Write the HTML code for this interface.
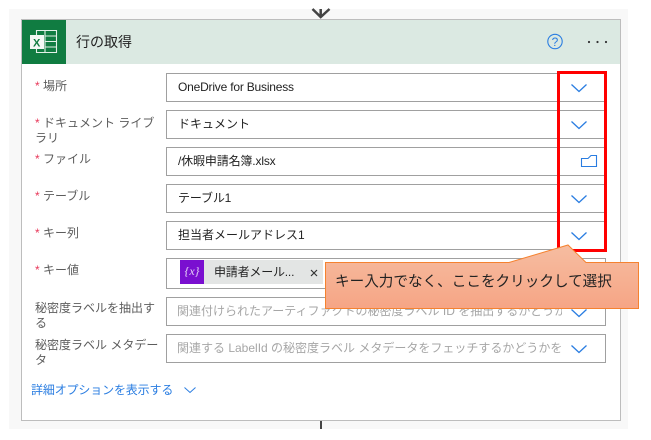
<!DOCTYPE html>
<html lang="ja"><head><meta charset="utf-8"><style>
html,body{margin:0;padding:0;background:#fff}
body{width:651px;height:440px;overflow:hidden;position:relative;font-family:"Liberation Sans","Noto Sans CJK JP",sans-serif;color:#333}
div{position:absolute;box-sizing:border-box;white-space:nowrap}
.in{left:166px;width:440px;height:29px;border:1px solid #a0a0a0;background:#fff;font-size:12px;line-height:27px;padding-left:11px;color:#222;overflow:hidden}
.ph{color:#a6a6a6;width:385px;overflow:hidden;left:10px;top:0;line-height:27px;font-size:12px}
.lb{left:35px;font-size:12px;line-height:15px;color:#5c5c5c;width:125px;white-space:normal}
.lb b{color:#e8385a;font-weight:normal}
svg{position:absolute;overflow:visible}
</style></head><body>
<div style="left:9px;top:9px;width:619px;height:420px;background:#f8f8f8"></div>
<svg style="left:0;top:0" width="651" height="440"><path d="M320.700 9V17.500M312.500 9l8.200 8 8.800-8" fill="none" stroke="#444" stroke-width="2.500"/><path d="M321 421V429" stroke="#444" stroke-width="2"/></svg>
<div style="left:21px;top:19px;width:600px;height:402px;background:#fff;border:1px solid #bdbdbd"></div>
<div style="left:22px;top:20px;width:598px;height:44px;background:#dbe9e2"></div>
<div style="left:22px;top:20px;width:44px;height:44px;background:#107c41"></div>
<svg style="left:22px;top:20px" width="44" height="44"><path d="M14.500 10.500H34.500V32.500H14.500Z M23 10.500V32.500 M23 16H34.500M23 21.500H34.500M23 27H34.500" fill="none" stroke="#e3f0e8" stroke-width="1.100"/><rect x="8" y="15" width="14" height="14" fill="#f4f8f5"/><text x="11" y="26.500" font-family="Liberation Sans" font-weight="bold" font-size="11" fill="#107c41">X</text></svg>
<div style="left:76px;top:32px;font-size:14px;line-height:20px;color:#222">行の取得</div>
<svg style="left:547px;top:33px" width="18" height="18"><circle cx="8" cy="8.500" r="7.200" fill="none" stroke="#2a7de1" stroke-width="1.100"/><text x="8" y="12.800" text-anchor="middle" font-family="Liberation Sans" font-size="12" fill="#2a7de1">?</text></svg>
<svg style="left:587px;top:40px" width="22" height="6"><circle cx="2" cy="2" r="1.100" fill="#333"/><circle cx="10.500" cy="2" r="1.100" fill="#333"/><circle cx="19" cy="2" r="1.100" fill="#333"/></svg>

<div class="lb" style="top:79px"><b>*</b> 場所</div>
<div class="lb" style="top:116px"><b>*</b> ドキュメント ライブラリ</div>
<div class="lb" style="top:152px"><b>*</b> ファイル</div>
<div class="lb" style="top:189px"><b>*</b> テーブル</div>
<div class="lb" style="top:226px"><b>*</b> キー列</div>
<div class="lb" style="top:263px"><b>*</b> キー値</div>
<div class="lb" style="top:301px">秘密度ラベルを抽出する</div>
<div class="lb" style="top:338px">秘密度ラベル メタデータ</div>

<div class="in" style="top:73px;letter-spacing:-.2px">OneDrive for Business</div>
<div class="in" style="top:110px">ドキュメント</div>
<div class="in" style="top:147px;letter-spacing:-.15px">/休暇申請名簿.xlsx</div>
<div class="in" style="top:184px;letter-spacing:-.15px">テーブル1</div>
<div class="in" style="top:221px">担当者メールアドレス1</div>
<div class="in" style="top:258px;height:31px"></div>
<div class="in" style="top:297px"><div class="ph">関連付けられたアーティファクトの秘密度ラベル ID を抽出するかどうかを指定します</div></div>
<div class="in" style="top:334px"><div class="ph">関連する LabelId の秘密度ラベル メタデータをフェッチするかどうかを指定します</div></div>

<div style="left:180px;top:260px;width:24px;height:24px;background:#7a0fd0"></div>
<div style="left:180px;top:260px;width:24px;height:24px;color:#e6d4f6;font:italic 12px/23px 'Liberation Serif',serif;text-align:center">{x}</div>
<div style="left:204px;top:260px;width:119px;height:24px;background:#e3e5e4"></div>
<div style="left:214px;top:260px;font-size:12px;line-height:24px;color:#222;letter-spacing:-.2px">申請者メール...</div>
<svg style="left:310px;top:269px" width="8" height="8"><path d="M1 1L7 7M7 1L1 7" stroke="#333" stroke-width="1.200"/></svg>

<svg style="left:0;top:0" width="651" height="440" fill="none" stroke="#2a7de1" stroke-width="1.300">
<path d="M571.500 84.500l7.500 7 7.500-7"/><path d="M571.500 121.500l7.500 7 7.500-7"/>
<path d="M571.500 195.500l7.500 7 7.500-7"/><path d="M571.500 232.500l7.500 7 7.500-7"/>
<path d="M571.500 309.500l7.500 7 7.500-7"/><path d="M571.500 345.500l7.500 7 7.500-7"/>
<path d="M581.500 158.500H588L591 155.500H596.500V166.500H581.500Z" stroke-width="1.100"/>
<path d="M184.500 387.500l5.500 5 5.500-5" stroke-width="1"/>
</svg>
<div style="left:557px;top:71px;width:50px;height:181px;border:3px solid #f00"></div>

<svg style="left:0;top:0" width="651" height="440"><defs><linearGradient id="g" x1="0" y1="0" x2="0" y2="1"><stop offset="0" stop-color="#f6bda1"/><stop offset="1" stop-color="#f6a585"/></linearGradient></defs><path d="M325.500 262.500H509L568 245 586 262.500H638.500V308.500H325.500Z" fill="url(#g)" stroke="#f5822f" stroke-width="1"/></svg>
<div style="left:335px;top:272px;font-size:14.600px;line-height:20px;color:#222">キー入力でなく、ここをクリックして選択</div>

<div style="left:31px;top:382px;font-size:12px;line-height:16px;color:#2a7de1;letter-spacing:-.15px">詳細オプションを表示する</div>
</body></html>
